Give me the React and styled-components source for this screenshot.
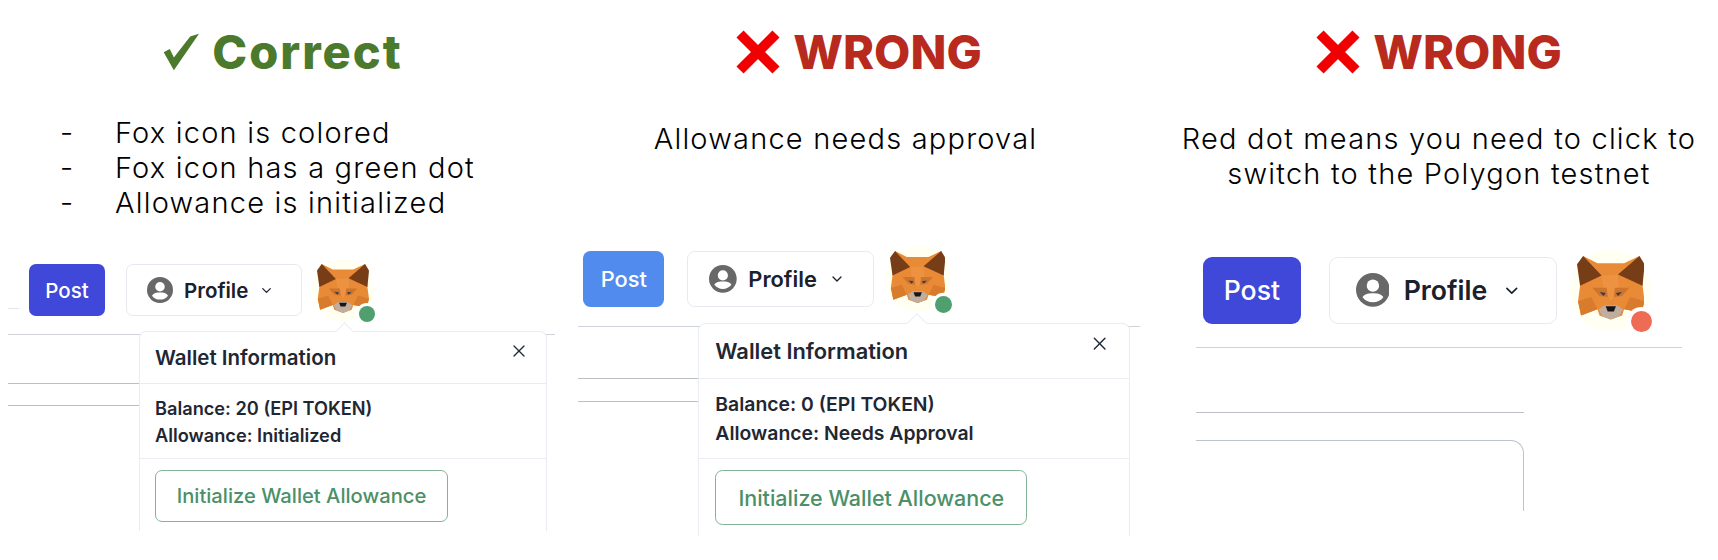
import React from "react";
import styled, { createGlobalStyle } from "styled-components";
import { ChevronDown, X } from "lucide-react";

const GlobalStyle = createGlobalStyle`
  html, body {
    margin: 0;
    background: #fff;
  }
  body {
    height: 560px;
    overflow: hidden;
    font-family: Inter, "Liberation Sans", sans-serif;
  }
`;

function CheckMark() {
  return (
    <HeadingIcon width="36" height="38" viewBox="0 0 106 108">
      <polygon points="2,55 20,45 32,70 80,8 106,0 32,108" fill="#4b7a2c" />
    </HeadingIcon>
  );
}

function CrossMark() {
  return (
    <HeadingIcon width="44" height="44" viewBox="0 0 44 44">
      <path d="M4 4 L40 40 M40 4 L4 40" stroke="#f00000" strokeWidth="10" />
    </HeadingIcon>
  );
}

function UserIcon() {
  return (
    <svg width="26" height="26" viewBox="0 0 24 24">
      <circle cx="12" cy="12" r="12" fill="#686868" />
      <circle cx="12" cy="9" r="4.4" fill="#fff" />
      <path d="M4.6 17.2 C6 14.8 9 14.4 12 14.4 C15 14.4 18 14.8 19.4 17.2 C17.6 19.6 15 20.8 12 20.8 C9 20.8 6.4 19.6 4.6 17.2 Z" fill="#fff" />
    </svg>
  );
}

function Fox() {
  return (
    <svg width="52" height="49" viewBox="0 0 66 62">
      <polygon points="6,0 20,7 46,7 61,0 64,29 66,44 63,55 46,52 44,58 33,62 22,58 20,52 4,58 1,44 3,29" fill="#e88a36" />
      <polygon points="6,0 24,19 3,29 0,8" fill="#763d16" />
      <polygon points="61,0 40,18 64,29 66,8" fill="#763d16" />
      <polygon points="24,19 40,18 41,32 33,44 26,32" fill="#ec9240" />
      <polygon points="1,44 14,40 20,52 4,58" fill="#d97b2c" />
      <polygon points="66,44 52,40 46,52 63,55" fill="#d97b2c" />
      <polygon points="15,31 29,31 30,40 22,39" fill="#cf742b" />
      <polygon points="51,31 37,31 36,40 44,39" fill="#cf742b" />
      <polygon points="22,35 28,36 26,39" fill="#2f3d55" />
      <polygon points="44,35 38,36 40,39" fill="#2f3d55" />
      <polygon points="21,52 27,48 39,48 45,52 41,59 33,62 25,59" fill="#c0ad9e" />
      <polygon points="28,49 38,49 36,54 30,54" fill="#161616" />
    </svg>
  );
}

function Toolbar({ postColor, dotColor, stub }) {
  return (
    <ToolbarRow>
      {stub ? <Stub /> : <Spacer />}
      <PostButton $color={postColor}>Post</PostButton>
      <ProfileButton>
        <UserIcon />
        <span>Profile</span>
        <ChevronDown size={15} strokeWidth={2} color="#1a202c" />
      </ProfileButton>
      <Avatar>
        <Fox />
        <StatusDot $color={dotColor} />
      </Avatar>
    </ToolbarRow>
  );
}

function WalletPopover({ left, width, balance, allowance }) {
  return (
    <Popover $left={left} $width={width}>
      <Arrow />
      <PopoverHeader>
        <PopoverTitle>Wallet Information</PopoverTitle>
        <CloseButton>
          <X size={20} strokeWidth={1.6} color="#1f2937" />
        </CloseButton>
      </PopoverHeader>
      <PopoverBody>
        <div>Balance: {balance} (EPI TOKEN)</div>
        <div>Allowance: {allowance}</div>
      </PopoverBody>
      <PopoverFooter>
        <InitButton>Initialize Wallet Allowance</InitButton>
      </PopoverFooter>
    </Popover>
  );
}

export default function App() {
  return (
    <>
      <GlobalStyle />
      <Page>
        <Column $width={560}>
          <Heading $color="#4b7a2c" $shift={3} $spacing={2}>
            <CheckMark />
            Correct
          </Heading>
          <TextBlock $top={33}>
            <ListRow><Dash>-</Dash>Fox icon is colored</ListRow>
            <ListRow><Dash>-</Dash>Fox icon has a green dot</ListRow>
            <ListRow><Dash>-</Dash>Allowance is initialized</ListRow>
          </TextBlock>
          <PanelSlot $left={8} $top={14}>
            <Panel $zoom={1} $width={547}>
              <Toolbar postColor="#3f48d8" dotColor="#4f9f6f" stub />
              <SubLine $width={131} $gap={48} />
              <SubLine $width={131} $gap={21} />
              <WalletPopover left={131} width={408} balance="20" allowance="Initialized" />
            </Panel>
          </PanelSlot>
        </Column>

        <Column $width={582}>
          <Heading $color="#b92a1e" $shift={8}>
            <CrossMark />
            WRONG
          </Heading>
          <TextBlock $top={39} $center $shift={-5.5}>
            Allowance needs approval
          </TextBlock>
          <PanelSlot $left={18} $top={1}>
            <Panel $zoom={1.065} $width={528}>
              <Toolbar postColor="#528bee" dotColor="#4f9f6f" />
              <SubLine $width={113} $gap={48} />
              <SubLine $width={113} $gap={21} />
              <WalletPopover left={113} width={405} balance="0" allowance="Needs Approval" />
            </Panel>
          </PanelSlot>
        </Column>

        <Column $width={576}>
          <Heading $color="#b92a1e" $shift={9}>
            <CrossMark />
            WRONG
          </Heading>
          <TextBlock $top={39} $center $shift={9}>
            Red dot means you need to click to
            <br />
            switch to the Polygon testnet
          </TextBlock>
          <PanelSlot $left={54} $top={5}>
            <Panel $zoom={1.3} $width={374}>
              <Toolbar postColor="#3f48d8" dotColor="#ee6c55" />
              <SubLine $width={252} $gap={49} />
              <CardEdge />
            </Panel>
          </PanelSlot>
        </Column>
      </Page>
    </>
  );
}

const Page = styled.div`
  display: flex;
  width: 1718px;
  height: 560px;
  overflow: hidden;
  color: #000;
`;

const Column = styled.section`
  display: flex;
  flex-direction: column;
  flex: none;
  width: ${(p) => p.$width}px;
`;

const Heading = styled.h2`
  display: flex;
  align-items: center;
  justify-content: center;
  gap: 13px;
  box-sizing: border-box;
  height: 60px;
  margin: 22px 0 0;
  padding-left: ${(p) => Math.max(p.$shift, 0) * 2}px;
  padding-right: ${(p) => Math.max(-p.$shift, 0) * 2}px;
  font-size: 47px;
  font-weight: 800;
  line-height: 60px;
  letter-spacing: ${(p) => p.$spacing || 0}px;
  color: ${(p) => p.$color};
`;

const HeadingIcon = styled.svg`
  flex: none;
`;

const TextBlock = styled.div`
  box-sizing: border-box;
  height: 163px;
  padding-top: ${(p) => p.$top}px;
  padding-left: ${(p) => Math.max(p.$shift || 0, 0) * 2}px;
  padding-right: ${(p) => Math.max(-(p.$shift || 0), 0) * 2}px;
  font-size: 29px;
  font-weight: 300;
  line-height: 35px;
  letter-spacing: 1.2px;
  white-space: nowrap;
  text-align: ${(p) => (p.$center ? "center" : "left")};
`;

const ListRow = styled.div`
  display: flex;
  padding-left: 60px;
`;

const Dash = styled.span`
  width: 55px;
`;

const PanelSlot = styled.div`
  padding-left: ${(p) => p.$left}px;
  padding-top: ${(p) => p.$top}px;
`;

const Panel = styled.div`
  position: relative;
  zoom: ${(p) => p.$zoom};
  width: ${(p) => p.$width}px;
`;

const ToolbarRow = styled.div`
  display: flex;
  align-items: center;
  height: 62px;
  padding-bottom: 13px;
  border-bottom: 1px solid #cfd3d9;
`;

const Stub = styled.div`
  align-self: flex-end;
  width: 11px;
  height: 1px;
  margin: 0 10px 12px 0;
  background: #e3e5e8;
`;

const Spacer = styled.div`
  width: 5px;
`;

const PostButton = styled.button`
  flex: none;
  width: 76px;
  height: 52px;
  margin-right: 21px;
  padding: 0;
  border: 0;
  border-radius: 7px;
  background: ${(p) => p.$color};
  color: #fff;
  font: 500 20.5px Inter, sans-serif;
`;

const ProfileButton = styled.button`
  display: flex;
  flex: none;
  align-items: center;
  box-sizing: border-box;
  width: 176px;
  height: 52px;
  margin-right: 10px;
  padding: 0 0 0 20px;
  border: 1px solid #e6eaf0;
  border-radius: 7px;
  background: #fff;
  color: #1a202c;
  font: 600 20.5px Inter, sans-serif;

  span {
    margin: 0 11px;
  }
`;

const Avatar = styled.div`
  position: relative;
  display: flex;
  flex: none;
  align-items: center;
  justify-content: center;
  box-sizing: border-box;
  width: 62px;
  height: 62px;
  padding-bottom: 4px;
  border-radius: 50%;
  background: #fffff2;
`;

const StatusDot = styled.span`
  position: absolute;
  left: 47px;
  top: 47px;
  width: 16px;
  height: 16px;
  border-radius: 50%;
  background: ${(p) => p.$color};
  box-shadow: 0 0 0 3px #fff;
`;

const SubLine = styled.div`
  width: ${(p) => p.$width}px;
  margin-top: ${(p) => p.$gap}px;
  border-top: 1px solid #bcbfc4;
`;

const CardEdge = styled.div`
  box-sizing: border-box;
  width: 252px;
  height: 54px;
  margin-top: 21px;
  border-top: 1px solid #bcc3cc;
  border-right: 1px solid #bcc3cc;
  border-top-right-radius: 10px;
`;

const Popover = styled.div`
  position: absolute;
  top: 72px;
  left: ${(p) => p.$left}px;
  box-sizing: border-box;
  width: ${(p) => p.$width}px;
  height: 200px;
  border: 1px solid #e9edf3;
  border-bottom: 0;
  border-radius: 7px 7px 0 0;
  background: #fff;
  color: #1f2733;
`;

const Arrow = styled.span`
  position: absolute;
  top: -7px;
  left: 198px;
  width: 12px;
  height: 12px;
  border-top: 1px solid #e9edf3;
  border-left: 1px solid #e9edf3;
  background: #fff;
  transform: rotate(45deg);
`;

const PopoverHeader = styled.header`
  display: flex;
  align-items: flex-start;
  justify-content: space-between;
  box-sizing: border-box;
  height: 52px;
  padding: 0 17px 0 15px;
  border-bottom: 1px solid #e9edf3;
`;

const PopoverTitle = styled.h3`
  margin: 14px 0 0;
  font-size: 20.5px;
  font-weight: 600;
  line-height: 24px;
`;

const CloseButton = styled.span`
  display: flex;
  margin-top: 9px;
`;

const PopoverBody = styled.div`
  box-sizing: border-box;
  height: 75px;
  padding: 10.5px 15px 0;
  border-bottom: 1px solid #e9edf3;
  font-size: 18.2px;
  font-weight: 600;
  line-height: 27px;
`;

const PopoverFooter = styled.footer`
  padding: 10.5px 15px 0;
`;

const InitButton = styled.button`
  box-sizing: border-box;
  width: 293px;
  height: 52px;
  padding: 0;
  border: 1.5px solid #83b296;
  border-radius: 7px;
  background: #fff;
  color: #4b9068;
  font: 500 20.2px Inter, sans-serif;
`;
